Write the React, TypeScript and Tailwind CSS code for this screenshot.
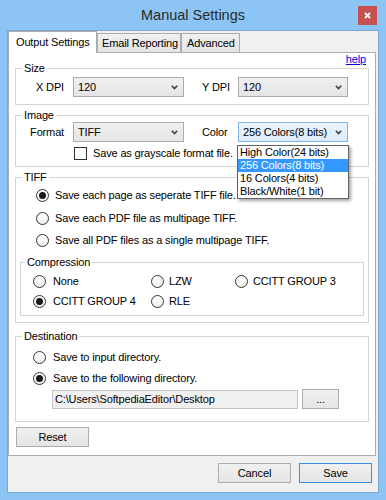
import React from "react";

function Chevron() {
  return (
    <svg width="7" height="5" viewBox="0 0 7 5" className="shrink-0">
      <path d="M0.8 0.8 L3.5 3.6 L6.2 0.8" fill="none" stroke="#404040" strokeWidth="1.6" />
    </svg>
  );
}

function Combo({ value, className, focused, children }: { value: string; className: string; focused?: boolean; children?: React.ReactNode }) {
  return (
    <div
      className={
        "relative h-[20px] flex items-center justify-between pl-[4px] pr-[5px] border leading-[13px] " +
        (focused
          ? "border-[#7eb4ea] bg-linear-to-b from-[#ecf4fc] to-[#dcecfc] "
          : "border-[#acacac] bg-linear-to-b from-[#f0f0f0] to-[#e5e5e5] ") +
        className
      }
    >
      <span className="whitespace-nowrap">{value}</span>
      <Chevron />
      {children}
    </div>
  );
}

function Radio({ checked }: { checked?: boolean }) {
  return (
    <span className="w-[13px] h-[13px] rounded-full border border-[#333333] bg-linear-to-b from-[#ffffff] to-[#f0f0f0] flex items-center justify-center shrink-0">
      {checked && <span className="w-[7px] h-[7px] rounded-full bg-[#1a1a1a]" />}
    </span>
  );
}

function RadioRow({ label, checked, gap, className }: { label: string; checked?: boolean; gap: string; className?: string }) {
  return (
    <div className={"h-[20px] flex items-center leading-[13px] " + (className ?? "")}>
      <Radio checked={checked} />
      <span className={"whitespace-nowrap " + gap}>{label}</span>
    </div>
  );
}

function Button({ label, className }: { label: string; className?: string }) {
  return (
    <div
      className={
        "h-[20px] flex items-center justify-center border bg-linear-to-b from-[#f0f0f0] to-[#e5e5e5] leading-[13px] " +
        (className ?? "")
      }
    >
      {label}
    </div>
  );
}

export default function App() {
  return (
    <div className="w-[386px] h-[500px] bg-[#8cc5f5] flex flex-col px-[7px] pb-[7px] font-['Liberation_Sans',Arial,sans-serif] text-[11px] tracking-[-0.15px] text-black">
      {/* title bar */}
      <div className="h-[30px] grid grid-cols-[1fr_auto_1fr] items-center">
        <div />
        <div className="text-[14.5px] tracking-normal text-[#2b2b2b] leading-none">Manual Settings</div>
        <div className="justify-self-end mr-[2px] w-[19px] h-[19px] bg-[#c75050] flex items-center justify-center">
          <svg width="7" height="7" viewBox="0 0 7 7">
            <path d="M1 1 L6 6 M6 1 L1 6" stroke="#ffffff" strokeWidth="1.8" />
          </svg>
        </div>
      </div>

      {/* client */}
      <div className="flex-1 flex flex-col bg-[#f0f0f0] border border-[#7ba7d3]">
        {/* tabs */}
        <div className="h-[21px] flex items-end">
          <div className="relative z-10 h-[22px] -mb-[1px] w-[89px] bg-white border border-b-0 border-[#acacac] pl-[7px] pt-[4px] leading-[13px] whitespace-nowrap">
            Output Settings
          </div>
          <div className="h-[19px] w-[84px] bg-linear-to-b from-[#f0f0f0] to-[#e5e5e5] border border-b-0 border-[#acacac] pl-[4px] pt-[3px] leading-[13px] whitespace-nowrap">
            Email Reporting
          </div>
          <div className="h-[19px] w-[59px] bg-linear-to-b from-[#f0f0f0] to-[#e5e5e5] border border-b-0 border-[#acacac] pl-[5px] pt-[3px] leading-[13px] whitespace-nowrap">
            Advanced
          </div>
        </div>

        {/* panel */}
        <div className="flex-1 mr-[2px] bg-white border border-[#acacac] flex flex-col">
          <div className="h-[9px] flex justify-end pr-[9px]">
            <span className="leading-[13px] h-[13px] text-[#0000ee] underline">help</span>
          </div>

          {/* Size */}
          <fieldset className="mx-[6px] border border-[#d5d5d5] px-[8px] pt-[2px] pb-[7px]">
            <legend className="px-[2px] -ml-[2px] leading-[13px]">Size</legend>
            <div className="flex items-center">
              <span className="w-[40px] text-right leading-[13px]">X DPI</span>
              <Combo value="120" className="ml-[9px] w-[111px]" />
              <span className="ml-[18px] w-[36px] leading-[13px]">Y DPI</span>
              <Combo value="120" className="w-[110px]" />
            </div>
          </fieldset>

          {/* Image */}
          <fieldset className="relative z-20 mt-[4px] mx-[6px] border border-[#d5d5d5] px-[8px] pt-0 pb-[6px]">
            <legend className="px-[2px] -ml-[2px] leading-[13px]">Image</legend>
            <div className="flex items-center">
              <span className="w-[40px] text-right leading-[13px]">Format</span>
              <Combo value="TIFF" className="ml-[9px] w-[111px]" />
              <span className="ml-[18px] w-[36px] leading-[13px]">Color</span>
              <Combo value="256 Colors(8 bits)" className="w-[110px]" focused>
                <div className="absolute top-[22px] -left-[2px] w-[112px] z-30 bg-white border border-[#646464] shadow-[2px_2px_3px_rgba(0,0,0,0.35)] flex flex-col">
                  <div className="h-[13px] leading-[13px] pl-[2px] whitespace-nowrap">High Color(24 bits)</div>
                  <div className="h-[13px] leading-[13px] pl-[2px] bg-[#3399ff] text-white whitespace-nowrap">256 Colors(8 bits)</div>
                  <div className="h-[13px] leading-[13px] pl-[2px] whitespace-nowrap">16 Colors(4 bits)</div>
                  <div className="h-[13px] leading-[13px] pl-[2px] whitespace-nowrap">Black/White(1 bit)</div>
                </div>
              </Combo>
            </div>
            <div className="mt-[5px] flex items-center ml-[50px] leading-[13px]">
              <span className="w-[13px] h-[13px] border border-[#333333] bg-white shrink-0" />
              <span className="ml-[6px] whitespace-nowrap">Save as grayscale format file.</span>
            </div>
          </fieldset>

          {/* TIFF */}
          <fieldset className="mt-[4px] mx-[6px] border border-[#d5d5d5] px-[8px] pt-[1px] pb-[6px]">
            <legend className="px-[2px] -ml-[2px] leading-[13px]">TIFF</legend>
            <RadioRow label="Save each page as seperate TIFF file." checked gap="ml-[6px]" className="ml-[12px]" />
            <RadioRow label="Save each PDF file as multipage TIFF." gap="ml-[6px]" className="ml-[12px] mt-[3px]" />
            <RadioRow label="Save all PDF files as a single multipage TIFF." gap="ml-[6px]" className="ml-[12px] mt-[2px]" />

            <fieldset className="mt-[6px] -mx-[4px] border border-[#d5d5d5] px-[6px] pt-[2px] pb-[4px]">
              <legend className="px-[2px] -ml-[2px] leading-[13px]">Compression</legend>
              <div className="ml-[6px] grid grid-cols-[118px_84px_1fr]">
                <RadioRow label="None" gap="ml-[7px]" />
                <RadioRow label="LZW" gap="ml-[5px]" />
                <RadioRow label="CCITT GROUP 3" gap="ml-[5px]" />
                <RadioRow label="CCITT GROUP 4" checked gap="ml-[7px]" />
                <RadioRow label="RLE" gap="ml-[5px]" />
              </div>
            </fieldset>
          </fieldset>

          {/* Destination */}
          <fieldset className="mt-[7px] mx-[6px] border border-[#d5d5d5] px-[8px] pt-[4px] pb-[12px]">
            <legend className="px-[2px] -ml-[2px] leading-[13px]">Destination</legend>
            <RadioRow label="Save to input directory." gap="ml-[7px]" className="ml-[9px]" />
            <RadioRow label="Save to the following directory." checked gap="ml-[7px]" className="ml-[9px] mt-[1px]" />
            <div className="mt-[1px] flex items-center ml-[28px]">
              <div className="w-[246px] h-[19px] border border-[#c5c5c5] bg-[#f0f0f0] pl-[2px] flex items-center leading-[13px] whitespace-nowrap">
                C:\Users\SoftpediaEditor\Desktop
              </div>
              <Button label="..." className="ml-[4px] w-[37px] border-[#adadad]" />
            </div>
          </fieldset>

          <div className="mt-[5px] ml-[7px]">
            <Button label="Reset" className="w-[73px] border-[#adadad]" />
          </div>
        </div>

        {/* bottom buttons */}
        <div className="mt-[7px] mb-[9px] mr-[6px] flex justify-end gap-[8px]">
          <Button label="Cancel" className="w-[73px] border-[#adadad]" />
          <Button label="Save" className="w-[73px] border-[#3c8ee0]" />
        </div>
      </div>
    </div>
  );
}
